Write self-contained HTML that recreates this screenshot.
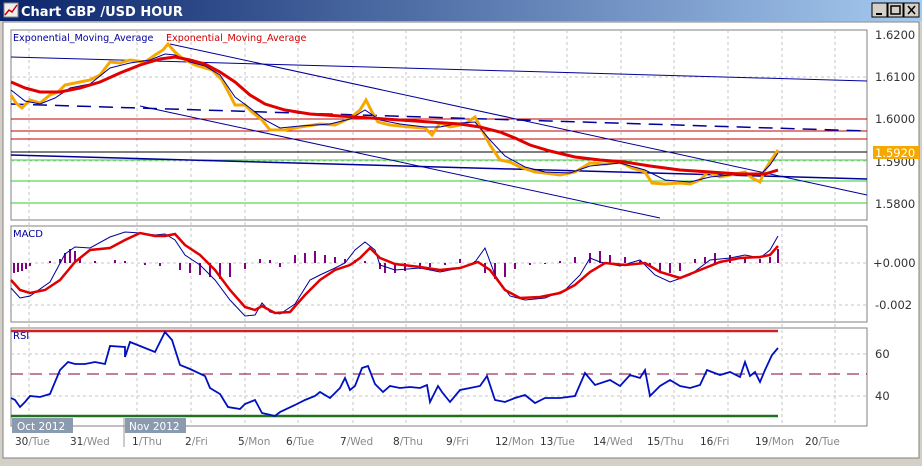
<!DOCTYPE html>
<html><head><style>
body{margin:0;width:922px;height:461px;overflow:hidden;background:#d4d0c8;font-family:"Liberation Sans",sans-serif}
</style></head><body>
<svg width="922" height="461" xmlns="http://www.w3.org/2000/svg" font-family="DejaVu Sans, sans-serif">
<defs><linearGradient id="tb" x1="0" x2="1"><stop offset="0" stop-color="#0a246a"/><stop offset="1" stop-color="#a6caf0"/></linearGradient></defs>
<rect x="0" y="0" width="922" height="461" fill="#d4d0c8"/>
<rect x="0" y="0" width="922" height="21" fill="url(#tb)"/>
<rect x="4" y="3" width="14" height="14" fill="#eee" stroke="#888"/>
<polyline points="5,15 9,10 12,12 17,5" fill="none" stroke="#c00" stroke-width="1.5"/>
<text x="21" y="16" font-size="13" font-weight="bold" fill="#fff" font-family="DejaVu Sans, sans-serif">Chart GBP /USD  HOUR</text>
<g stroke="#000" fill="#d4d0c8"><rect x="872" y="3" width="15" height="14"/><rect x="888" y="3" width="15" height="14"/><rect x="904" y="3" width="15" height="14"/></g>
<line x1="876" y1="14" x2="882" y2="14" stroke="#000" stroke-width="2"/>
<rect x="891" y="6" width="9" height="8" fill="none" stroke="#000" stroke-width="1.5"/>
<path d="M908 6l7 8M915 6l-7 8" stroke="#000" stroke-width="1.5"/>
<rect x="3" y="22" width="916" height="436" fill="#fff" stroke="#808080"/>
<g fill="#fff" stroke="#808080"><rect x="11" y="30" width="856" height="190"/><rect x="11" y="226" width="856" height="96"/><rect x="11" y="328" width="856" height="98"/></g>
<g stroke="#c4c4c4" stroke-dasharray="3,3">
<path d="M29 30V426M137 30V426M191 30V426M245 30V426M298 30V426M353 30V426M406 30V426M461 30V426M514 30V426M567 30V426M621 30V426M674 30V426M728 30V426M782 30V426M835 30V426"/>
<path d="M11 77H867M11 119H867M11 161H867M11 203H867M11 263H867M11 305H867M11 354H867M11 396H867"/>
</g>
<g fill="none">
<line x1="11" y1="119" x2="867" y2="119" stroke="#c00000"/>
<line x1="11" y1="131" x2="867" y2="131" stroke="#c00000"/>
<line x1="11" y1="139" x2="867" y2="139" stroke="#c00000"/>
<line x1="11" y1="152" x2="867" y2="152" stroke="#000"/>
<line x1="11" y1="160" x2="867" y2="160" stroke="#3c3"/>
<line x1="11" y1="181" x2="867" y2="181" stroke="#3c3"/>
<line x1="11" y1="203" x2="867" y2="203" stroke="#3c3"/>
<line x1="11" y1="57" x2="867" y2="81" stroke="#00009a"/>
<line x1="170" y1="44" x2="867" y2="195" stroke="#00009a"/>
<line x1="140" y1="106" x2="660" y2="218" stroke="#00009a"/>
<line x1="11" y1="155" x2="867" y2="179" stroke="#00009a" stroke-width="1.5"/>
<line x1="11" y1="104" x2="867" y2="131" stroke="#00009a" stroke-width="1.5" stroke-dasharray="14,8"/>
<polyline stroke="#f5a800" stroke-width="3" points="11,95 16,103 22,108 30,100 40,103 50,95 58,92 65,85 75,83 90,80 100,75 110,62 120,63 130,60 145,62 155,55 163,50 168,44 175,52 182,58 195,65 205,68 212,70 222,80 230,95 235,105 245,105 252,112 262,120 270,130 285,130 300,127 320,124 335,125 350,118 360,110 366,100 372,112 378,122 390,125 410,127 425,128 432,135 440,123 450,127 465,124 475,117 482,130 490,145 500,160 510,162 520,167 535,172 545,173 560,175 575,172 590,163 605,164 620,162 632,168 645,172 652,183 665,184 680,183 690,184 700,180 708,172 720,177 735,174 745,172 752,178 760,182 765,170 770,162 778,150"/>
<polyline stroke="#00009a" stroke-width="1" points="11,90 25,101 40,104 55,98 70,88 90,84 110,68 130,63 150,60 165,54 175,55 190,62 205,66 220,75 235,97 250,108 265,120 280,128 300,126 330,124 350,119 365,110 380,120 400,124 425,127 440,127 460,123 475,122 490,140 505,156 525,167 545,172 570,173 590,166 620,163 645,170 665,180 690,182 710,177 740,174 760,175 770,165 778,153"/>
<polyline stroke="#e00000" stroke-width="3" points="11,82 25,88 40,92 60,92 80,88 100,82 120,73 140,65 160,59 175,57 190,60 205,64 220,72 235,82 250,95 265,104 285,110 310,114 340,116 370,118 400,120 430,122 460,124 480,127 500,132 515,138 530,145 550,151 575,157 600,160 625,162 650,166 680,170 710,172 740,174 765,174 778,170"/>
</g>
<text x="13" y="41" font-size="9.6" fill="#00009a">Exponential_Moving_Average</text>
<text x="166" y="41" font-size="9.6" fill="#d00000">Exponential_Moving_Average</text>
<g stroke="#800080" stroke-width="2">
<path d="M14 263v10M18 263v9M22 263v8M26 263v6M30 263v3M50 263v-2M60 263v-4M65 263v-10M70 263v-14M75 263v-12M80 263v-6M95 263v-2M115 263v-3M125 263v-2M145 263v2M160 263v3M180 263v7M190 263v10M200 263v12M210 263v14M220 263v16M230 263v14M245 263v6M260 263v-4M270 263v-3M280 263v4M295 263v-8M305 263v-10M315 263v-12M325 263v-8M335 263v-6M345 263v-4M355 263v-3M365 263v-2M380 263v6M385 263v10M395 263v10M405 263v8M420 263v6M430 263v4M445 263v2M460 263v-4M475 263v-2M485 263v10M495 263v16M505 263v14M515 263v6M530 263v2M545 263v1M560 263v-2M575 263v-6M590 263v-10M600 263v-12M610 263v-8M625 263v-6M640 263v-2M650 263v4M660 263v8M670 263v10M680 263v8M695 263v-4M705 263v-6M715 263v-10M730 263v-8M745 263v-6M760 263v-4M770 263v-6M778 263v-14"/>
</g>
<polyline fill="none" stroke="#00009a" points="11,288 20,298 30,296 50,282 65,254 75,247 90,248 110,237 125,232 140,233 155,235 165,234 175,240 185,255 200,265 215,280 230,300 245,316 255,315 262,303 270,312 280,314 295,304 310,280 320,275 335,268 345,263 355,250 365,242 375,250 380,265 395,270 420,268 440,272 460,268 475,262 485,248 495,275 510,296 525,300 545,298 565,290 580,275 590,258 600,262 620,266 640,260 655,275 670,282 690,275 710,260 730,258 745,255 760,258 770,250 778,236"/>
<polyline fill="none" stroke="#e00000" stroke-width="2.5" points="11,280 20,290 30,293 45,290 60,280 75,262 90,250 110,248 125,240 140,233 155,236 165,236 175,234 185,245 200,255 215,270 230,290 245,307 255,310 262,306 275,313 290,312 305,295 320,280 335,270 350,265 360,258 370,248 380,258 395,264 420,267 440,270 460,268 478,262 490,270 505,290 520,298 540,297 560,293 575,285 590,272 605,263 625,265 645,263 660,272 680,278 700,270 720,262 740,258 760,257 770,255 778,246"/>
<text x="13" y="237" font-size="10" fill="#00009a">MACD</text>
<line x1="11" y1="331" x2="778" y2="331" stroke="#d02020" stroke-width="2.5"/>
<line x1="11" y1="374" x2="867" y2="374" stroke="#800040" stroke-dasharray="12,7"/>
<line x1="11" y1="416" x2="778" y2="416" stroke="#207020" stroke-width="2.5"/>
<polyline fill="none" stroke="#0010c0" stroke-width="1.8" points="11,398 15,400 20,407 25,402 30,396 40,397 50,394 60,370 68,362 75,364 85,364 95,362 105,364 110,346 125,347 125,357 130,342 140,346 155,352 165,332 172,340 180,365 190,369 205,376 210,388 220,394 228,407 240,409 245,404 255,400 262,413 275,416 280,412 295,405 305,400 315,396 320,392 330,398 340,388 345,378 350,390 355,386 362,368 368,366 375,384 383,392 390,386 400,388 410,387 420,388 427,385 430,402 433,396 438,386 442,392 450,402 460,390 470,388 480,386 487,376 495,400 505,402 515,398 525,395 535,403 545,398 560,398 575,396 585,373 595,385 610,380 620,386 630,375 640,378 645,370 650,396 660,386 670,380 680,386 690,388 700,385 707,370 712,372 720,375 730,372 740,377 745,362 750,376 755,372 760,382 765,370 772,355 778,348"/>
<text x="13" y="339" font-size="10" fill="#00009a">RSI</text>
<g font-size="11.5" fill="#333">
<text x="875" y="39">1.6200</text><text x="875" y="81">1.6100</text><text x="875" y="123">1.6000</text><text x="875" y="166">1.5900</text><text x="875" y="208">1.5800</text>
<text x="873" y="267">+0.000</text><text x="875" y="309">-0.002</text>
<text x="875" y="358">60</text><text x="875" y="400">40</text>
</g>
<rect x="873" y="146" width="46" height="13" fill="#f5a800"/>
<text x="875" y="157" font-size="11.5" fill="#fff">1.5920</text>
<rect x="12" y="418" width="61" height="15" fill="#8a9bb0"/>
<rect x="125" y="418" width="61" height="15" fill="#8a9bb0"/>
<text x="17" y="430" font-size="10.5" fill="#fff">Oct 2012</text>
<text x="129" y="430" font-size="10.5" fill="#fff">Nov 2012</text>
<line x1="124" y1="418" x2="124" y2="447" stroke="#999"/>
<g font-size="10.5" fill="#333">
<text x="15" y="445">30<tspan fill="#888">/Tue</tspan></text><text x="70" y="445">31<tspan fill="#888">/Wed</tspan></text>
<text x="132" y="445">1<tspan fill="#888">/Thu</tspan></text><text x="185" y="445">2<tspan fill="#888">/Fri</tspan></text>
<text x="238" y="445">5<tspan fill="#888">/Mon</tspan></text><text x="286" y="445">6<tspan fill="#888">/Tue</tspan></text>
<text x="340" y="445">7<tspan fill="#888">/Wed</tspan></text><text x="393" y="445">8<tspan fill="#888">/Thu</tspan></text>
<text x="446" y="445">9<tspan fill="#888">/Fri</tspan></text><text x="495" y="445">12<tspan fill="#888">/Mon</tspan></text>
<text x="540" y="445">13<tspan fill="#888">/Tue</tspan></text><text x="593" y="445">14<tspan fill="#888">/Wed</tspan></text>
<text x="647" y="445">15<tspan fill="#888">/Thu</tspan></text><text x="700" y="445">16<tspan fill="#888">/Fri</tspan></text>
<text x="755" y="445">19<tspan fill="#888">/Mon</tspan></text><text x="805" y="445">20<tspan fill="#888">/Tue</tspan></text>
</g>
</svg>
</body></html>
